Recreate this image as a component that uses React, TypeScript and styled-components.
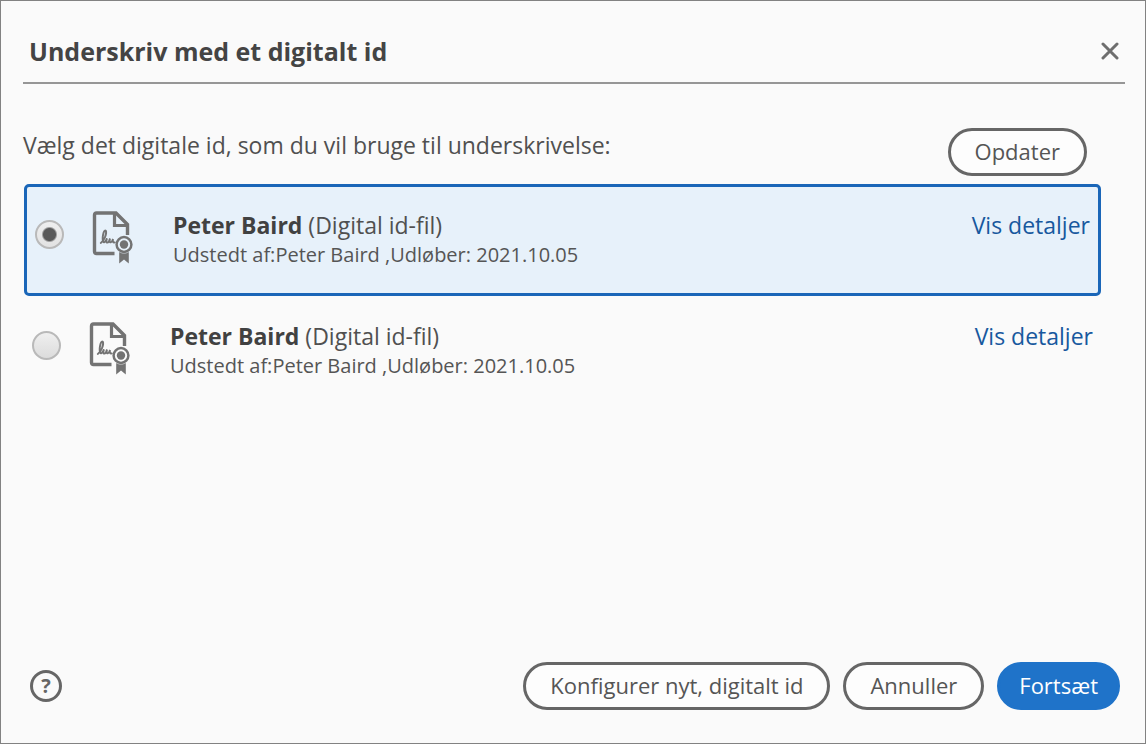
import React, { useState } from "react";
import styled, { createGlobalStyle } from "styled-components";

const GlobalStyle = createGlobalStyle`
  *, *::before, *::after { box-sizing: border-box; }
  body {
    margin: 0;
    background: #fafafa;
    color: #505050;
    font-family: "Open Sans", "Noto Sans", sans-serif;
    font-size: 23px;
    line-height: 30px;
  }
`;

const Dialog = styled.form`
  display: flex;
  flex-direction: column;
  min-height: 100vh;
  padding: 32px 20px 33px 22px;
  border: 1px solid #828282;
  background: #fafafa;
`;

const Header = styled.header`
  display: flex;
  align-items: center;
  justify-content: space-between;
  height: 51px;
  padding: 0 6px 14px;
  border-bottom: 2px solid #969696;
`;

const Title = styled.h1`
  margin: 0;
  color: #444;
  font-size: 25px;
  font-weight: 700;
  line-height: 36px;
`;

const CloseButton = styled.button`
  display: flex;
  padding: 0;
  border: 0;
  background: none;
  color: #6e6e6e;
  cursor: pointer;
`;

const Intro = styled.div`
  display: flex;
  align-items: flex-start;
  justify-content: space-between;
  padding: 44px 38px 8px 0;
`;

const Prompt = styled.p`
  margin: 0;
  padding-top: 2px;
`;

const PillButton = styled.button<{ $primary?: boolean }>`
  height: 48px;
  padding: 0 ${(p) => (p.$primary ? 19 : 24)}px 2px;
  border: 3px solid ${(p) => (p.$primary ? "#1f73c9" : "#666")};
  border-radius: 24px;
  background: ${(p) => (p.$primary ? "#1f73c9" : "#fdfdfd")};
  color: ${(p) => (p.$primary ? "#fff" : "#555")};
  font: inherit;
  font-size: 22px;
  white-space: nowrap;
  cursor: pointer;
`;

const IdList = styled.div`
  display: grid;
  gap: 2px;
  margin: 0 24px 0 1px;
`;

const IdRow = styled.div<{ $selected: boolean }>`
  display: flex;
  align-items: flex-start;
  padding: 23px 8px;
  border: ${(p) => (p.$selected ? "3px solid #1a66b8" : "0")};
  border-radius: 5px;
  background: ${(p) => (p.$selected ? "#e7f1fa" : "transparent")};
`;

const Radio = styled.input`
  appearance: none;
  flex: none;
  width: 29px;
  height: 29px;
  margin: 10px 28px 0 0;
  border: 2px solid #b9b9b9;
  border-radius: 50%;
  background: linear-gradient(#efefef, #dcdcdc);
  &:checked {
    background: radial-gradient(circle, #5a5a5a 6px, transparent 8px),
      linear-gradient(#efefef, #e2e2e2);
  }
`;

const IdLabel = styled.label`
  display: flex;
  flex: 1;
  cursor: pointer;
`;

const IdText = styled.span`
  display: flex;
  flex-direction: column;
  margin-left: 40px;
`;

const IdName = styled.strong`
  color: #414141;
  font-weight: 700;
`;

const IdMeta = styled.span`
  color: #555;
  font-size: 20px;
`;

const DetailsLink = styled.a`
  color: #17589e;
  text-decoration: none;
`;

const Footer = styled.footer`
  display: flex;
  align-items: center;
  gap: 13px;
  margin-top: auto;
  padding: 0 5px 0 7px;
`;

const HelpButton = styled.button`
  width: 32px;
  height: 32px;
  margin-right: auto;
  padding: 0;
  border: 3px solid #666;
  border-radius: 50%;
  background: none;
  color: #666;
  font: inherit;
  font-size: 20px;
  font-weight: 700;
  line-height: 26px;
  cursor: pointer;
`;

const CertificateSvg = styled.svg`
  flex: none;
  width: 41px;
  height: 53px;
  margin-top: 1px;
`;

function CertificateIcon() {
  return (
    <CertificateSvg viewBox="0 0 41 53" fill="none" stroke="#737373" aria-hidden="true">
      <path
        d="M22.5 42.5H4.5Q2.5 42.5 2.5 40.5V4Q2.5 2 4.5 2H24L35.5 13.5V24"
        strokeWidth="3.4"
      />
      <path d="M22.5 2V14.5H35.5" strokeWidth="3.2" />
      <path
        d="M8.8 32C12 30 15.2 22.5 13.8 19.8C11.5 17.8 9.8 28 11.3 30.8C12.3 32.5 14 29.5 15 27.3C14 30 14.2 31.8 15.3 31.6C16.5 31.5 17.5 29.5 18 27.5C17.3 30 17.7 31.7 18.8 31.3C19.8 31 20.5 29.5 21 28C20.5 30.5 21 31.8 22.8 31.4"
        strokeWidth="1.9"
        strokeLinecap="round"
      />
      <circle cx="32" cy="33.5" r="7.4" strokeWidth="2.5" />
      <circle cx="32" cy="33.5" r="4.2" fill="#737373" stroke="none" />
      <path d="M27.2 41Q32 44 36.8 41V52.5L32 48.5L27.2 52.5Z" fill="#737373" stroke="none" />
    </CertificateSvg>
  );
}

interface DigitalId {
  key: string;
  name: string;
  kind: string;
  issuer: string;
  expires: string;
}

const ids: DigitalId[] = [
  { key: "id-1", name: "Peter Baird", kind: "Digital id-fil", issuer: "Peter Baird", expires: "2021.10.05" },
  { key: "id-2", name: "Peter Baird", kind: "Digital id-fil", issuer: "Peter Baird", expires: "2021.10.05" },
];

export default function App() {
  const [selected, setSelected] = useState("id-1");

  return (
    <>
      <GlobalStyle />
      <Dialog role="dialog" aria-labelledby="title" onSubmit={(e) => e.preventDefault()}>
        <Header>
          <Title id="title">Underskriv med et digitalt id</Title>
          <CloseButton type="button" aria-label="Luk">
            <svg width="18" height="18" viewBox="0 0 18 18" stroke="currentColor" strokeWidth="3" strokeLinecap="round">
              <path d="M2 2L16 16M16 2L2 16" />
            </svg>
          </CloseButton>
        </Header>
        <Intro>
          <Prompt>Vælg det digitale id, som du vil bruge til underskrivelse:</Prompt>
          <PillButton type="button">Opdater</PillButton>
        </Intro>
        <IdList role="radiogroup">
          {ids.map((id) => (
            <IdRow key={id.key} $selected={selected === id.key}>
              <Radio
                type="radio"
                name="digital-id"
                id={id.key}
                checked={selected === id.key}
                onChange={() => setSelected(id.key)}
              />
              <IdLabel htmlFor={id.key}>
                <CertificateIcon />
                <IdText>
                  <span>
                    <IdName>{id.name}</IdName> ({id.kind})
                  </span>
                  <IdMeta>
                    Udstedt af:{id.issuer} ,Udløber: {id.expires}
                  </IdMeta>
                </IdText>
              </IdLabel>
              <DetailsLink href="#detaljer">Vis detaljer</DetailsLink>
            </IdRow>
          ))}
        </IdList>
        <Footer>
          <HelpButton type="button">?</HelpButton>
          <PillButton type="button">Konfigurer nyt, digitalt id</PillButton>
          <PillButton type="button">Annuller</PillButton>
          <PillButton type="submit" $primary>
            Fortsæt
          </PillButton>
        </Footer>
      </Dialog>
    </>
  );
}
